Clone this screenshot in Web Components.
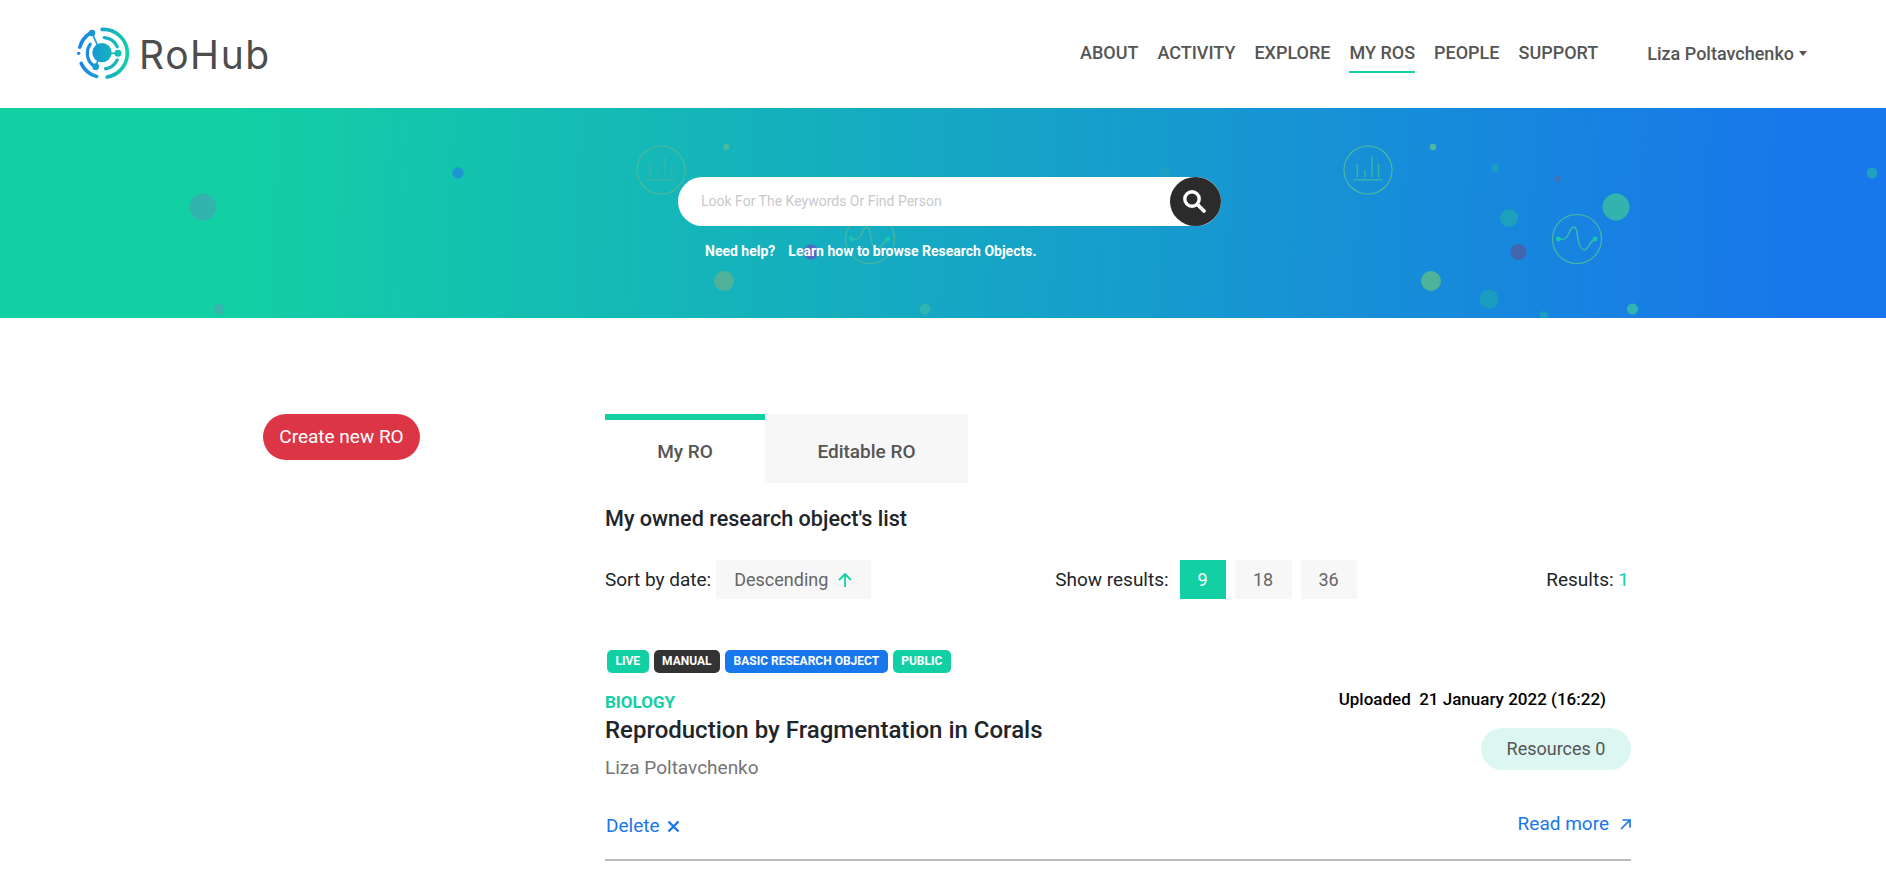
<!DOCTYPE html>
<html lang="en">
<head>
    <meta charset="UTF-8">
    <meta name="viewport" content="width=device-width, initial-scale=1.0">
    <title>RoHub</title>
    <style>
        html, body { margin: 0; background: #fff; }
        body { font-family: Roboto, "Liberation Sans", sans-serif; color: #212529; }
    </style>
</head>
<body>
    <rh-header>
        <rh-nav-link>ABOUT</rh-nav-link>
        <rh-nav-link>ACTIVITY</rh-nav-link>
        <rh-nav-link>EXPLORE</rh-nav-link>
        <rh-nav-link active>MY ROS</rh-nav-link>
        <rh-nav-link>PEOPLE</rh-nav-link>
        <rh-nav-link>SUPPORT</rh-nav-link>
        <span slot="user">Liza Poltavchenko</span>
    </rh-header>

    <rh-hero></rh-hero>

    <rh-page>
        <rh-create-button slot="side">Create new RO</rh-create-button>

        <rh-tabs>
            <rh-tab active>My RO</rh-tab>
            <rh-tab>Editable RO</rh-tab>
        </rh-tabs>
        <rh-list-heading>My owned research object's list</rh-list-heading>
        <rh-toolbar></rh-toolbar>

        <rh-card author="Liza Poltavchenko" category="BIOLOGY" uploaded="21 January 2022 (16:22)" resources="0">
            <rh-tag slot="tags" color="#13d0a4">LIVE</rh-tag>
            <rh-tag slot="tags" color="#333333">MANUAL</rh-tag>
            <rh-tag slot="tags" color="#1877ea">BASIC RESEARCH OBJECT</rh-tag>
            <rh-tag slot="tags" color="#13d0a4">PUBLIC</rh-tag>
            Reproduction by Fragmentation in Corals
        </rh-card>
    </rh-page>

    <template id="tplHeader">
        <style>
            :host { display: flex; height: 108px; box-sizing: border-box; padding-left: 73px; padding-right: 79px; background: #fff; }
            .logo { display: flex; align-items: center; gap: 6px; height: 108px; }
            .logo svg { width: 60px; height: 60px; display: block; }
            .logo span { font-family: Inter, sans-serif; font-weight: 400; font-size: 39px; color: #4d4d4d; letter-spacing: 1.6px; }
            nav { margin-left: auto; display: flex; gap: 19px; padding-top: 41px; align-items: flex-start; }
            .user { margin-left: 49px; display: flex; align-items: center; gap: 5px; height: 24px; font-weight: 500; font-size: 18px; color: #555; }
            .user i { width: 0; height: 0; border-top: 5px solid #555; border-left: 4px solid transparent; border-right: 4px solid transparent; }
        </style>
        <div class="logo">
            <svg viewBox="100 70 180 180" fill="none">
                <defs>
                    <linearGradient id="lg" gradientUnits="userSpaceOnUse" x1="113" y1="158" x2="268" y2="158">
                        <stop offset="0" stop-color="#1a7fec"/>
                        <stop offset="1" stop-color="#13d0a4"/>
                    </linearGradient>
                </defs>
                <g stroke="url(#lg)" stroke-linecap="round">
                    <g stroke-width="11">
                        <path d="M187.5 86A72 72 0 0 1 202.5 229"/>
                        <path d="M171 227.5A72 72 0 0 1 124.7 188.4"/>
                        <path d="M120.5 139.4A72 72 0 0 1 148.7 99"/>
                    </g>
                    <g stroke-width="10">
                        <path d="M194 111A47 47 0 0 1 232.6 138"/>
                        <path d="M159.8 194A47 47 0 0 1 151.5 131"/>
                        <path d="M232.6 178A47 47 0 0 1 198 204.3"/>
                    </g>
                    <path d="M157 97L183 155M235 158H183M168 198L183 155" stroke-width="5"/>
                </g>
                <circle cx="117" cy="158" r="5" fill="#1a7fec"/>
                <circle cx="157" cy="97" r="10" fill="url(#lg)"/>
                <circle cx="235" cy="158" r="10.5" fill="url(#lg)"/>
                <circle cx="168" cy="198" r="10" fill="url(#lg)"/>
                <circle cx="187" cy="156" r="29" fill="url(#lg)"/>
            </svg>
            <span>RoHub</span>
        </div>
        <nav><slot></slot></nav>
        <div style="padding-top:41px"><div class="user"><slot name="user"></slot><i></i></div></div>
    </template>

    <template id="tplNavLink">
        <style>
            :host { display: block; font-weight: 500; font-size: 18px; line-height: 24px; color: #555; padding-bottom: 6px; border-bottom: 2px solid transparent; }
            :host([active]) { border-bottom-color: #13d0a4; }
        </style>
        <slot></slot>
    </template>

    <template id="tplHero">
        <style>
            :host { display: block; position: relative; height: 210px; overflow: hidden; background: linear-gradient(92deg, #13d0a4 12%, #1877ea 95%); }
            svg { position: absolute; left: 0; top: 0; }
            .inner { position: relative; padding: 69px 0 0 678px; }
            .help { margin: 16px 0 0 27px; font-weight: 700; font-size: 14px; line-height: 18px; color: #fff; display: flex; gap: 13px; }
        </style>
        <svg id="deco" width="1886" height="210" viewBox="0 108 1886 210" fill="none"></svg>
        <div class="inner">
            <rh-search placeholder="Look For The Keywords Or Find Person"></rh-search>
            <div class="help"><span>Need help?</span><span>Learn how to browse Research Objects.</span></div>
        </div>
    </template>

    <template id="tplSearch">
        <style>
            :host { display: flex; width: 543px; height: 49px; background: #fff; border-radius: 25px; position: relative; }
            .ph { padding-left: 23px; font-size: 14px; line-height: 49px; color: #c9c9c9; }
            button { all: unset; margin-left: auto; width: 51px; height: 49px; border-radius: 50%; background: #2b2b2b; display: flex; align-items: center; justify-content: center; }
            button svg { margin: -1px 3px 0 0; }
        </style>
        <div class="ph" id="ph"></div>
        <button>
            <svg width="26" height="26" viewBox="0 0 26 26" fill="none" stroke="#fff">
                <circle cx="11" cy="11" r="7.2" stroke-width="3.4"/>
                <path d="M16.5 16.5L23 23" stroke-width="3.8" stroke-linecap="round"/>
            </svg>
        </button>
    </template>

    <template id="tplPage">
        <style>
            :host { display: grid; grid-template-columns: 343px 1026px; padding: 96px 0 0 262px; }
            .main { display: flex; flex-direction: column; }
        </style>
        <div><slot name="side"></slot></div>
        <div class="main"><slot></slot></div>
    </template>

    <template id="tplCreate">
        <style>
            :host { display: inline-block; width: 157px; height: 46px; margin-left: 1px; border-radius: 23px; background: #dc3545; color: #fff; font-size: 19px; line-height: 46px; text-align: center; }
        </style>
        <slot></slot>
    </template>

    <template id="tplTabs">
        <style>
            :host { display: flex; height: 69px; }
        </style>
        <slot></slot>
    </template>

    <template id="tplTab">
        <style>
            :host { display: flex; align-items: center; justify-content: center; box-sizing: border-box; width: 203px; padding-top: 5px; background: #f7f7f7; font-weight: 500; font-size: 19px; color: #555; }
            :host([active]) { width: 160px; background: #fff; border-top: 6px solid #13d0a4; padding-top: 0; }
        </style>
        <slot></slot>
    </template>

    <template id="tplHeading">
        <style>
            :host { display: block; margin-top: 22px; font-weight: 500; font-size: 21.6px; line-height: 28px; color: #212529; }
        </style>
        <slot></slot>
    </template>

    <template id="tplToolbar">
        <style>
            :host { display: flex; align-items: center; height: 39px; margin-top: 27px; font-size: 19px; color: #212529; }
            .box { display: flex; align-items: center; justify-content: center; height: 39px; background: #f7f7f7; color: #666; font-size: 18px; }
            .sort { width: 155px; margin-left: 5px; gap: 10px; justify-content: flex-start; box-sizing: border-box; padding-left: 18px; }
            .show { margin-left: 184px; margin-right: 11px; }
            .n { width: 57px; margin-right: 9px; }
            .n.on { width: 46px; background: #13d0a4; color: #fff; }
            .n.last { width: 56px; margin-right: 0; }
            .res { margin-left: auto; padding-right: 2px; }
            .res b { font-weight: 400; color: #13d0a4; }
        </style>
        <span>Sort by date:</span>
        <div class="box sort">
            <span>Descending</span>
            <svg width="14" height="14" viewBox="0 0 14 14" fill="none" stroke="#13d0a4" stroke-width="1.8"><path d="M7 14V1M1 7l6-6 6 6"/></svg>
        </div>
        <span class="show">Show results:</span>
        <div class="box n on">9</div>
        <div class="box n">18</div>
        <div class="box n last">36</div>
        <span class="res">Results: <b>1</b></span>
    </template>

    <template id="tplTag">
        <style>
            :host { display: block; height: 23px; padding: 0 8.5px; border-radius: 5px; font-weight: 700; font-size: 12px; line-height: 23px; color: #fff; background: var(--tag, #13d0a4); }
        </style>
        <slot></slot>
    </template>

    <template id="tplCard">
        <style>
            :host { display: block; margin-top: 51px; padding-bottom: 21px; border-bottom: 2px solid #bdbdbd; }
            .tags { display: flex; gap: 5px; padding-left: 2px; }
            .body { display: flex; justify-content: space-between; margin-top: 16px; }
            .left { padding-top: 3px; }
            .cat { font-weight: 700; font-size: 17px; line-height: 20px; color: #13d0a4; }
            .title { margin-top: 3px; font-weight: 500; font-size: 24px; line-height: 30px; color: #212529; }
            .author { margin-top: 11px; font-size: 19px; line-height: 24px; color: #757575; }
            .right { display: flex; flex-direction: column; align-items: flex-end; }
            .up { margin-right: 25px; font-weight: 500; font-size: 17px; line-height: 20px; color: #000; white-space: pre; }
            .pill { margin-top: 19px; width: 150px; height: 42px; border-radius: 21px; background: #dcf7f1; color: #555; font-size: 18px; line-height: 42px; text-align: center; }
            .foot { display: flex; justify-content: space-between; margin-top: 32px; height: 26px; font-size: 19px; line-height: 24px; color: #1877ea; }
            .foot div { display: flex; align-items: center; height: 24px; }
            .del { padding: 2px 0 0 1px; gap: 7px; }
            .more { gap: 11px; }
        </style>
        <div class="tags"><slot name="tags"></slot></div>
        <div class="body">
            <div class="left">
                <div class="cat" id="cat"></div>
                <div class="title"><slot></slot></div>
                <div class="author" id="author"></div>
            </div>
            <div class="right">
                <div class="up" id="up"></div>
                <div class="pill" id="pill"></div>
            </div>
        </div>
        <div class="foot">
            <div class="del">Delete
                <svg width="13" height="13" viewBox="0 0 13 13" fill="none" stroke="#1877ea" stroke-width="2.4"><path d="M1.5 1.5l10 10M11.5 1.5l-10 10"/></svg>
            </div>
            <div class="more">Read more
                <svg width="11" height="11" viewBox="0 0 11 11" fill="none" stroke="#1877ea" stroke-width="1.7"><path d="M1 10L10 1M2.5 1H10V8.5"/></svg>
            </div>
        </div>
    </template>

    <script>
        // little helper, every element here is just a template stamped in an open shadow root
        function define(tag, tplId, onCreate) {
            customElements.define(tag, class extends HTMLElement {
                constructor() {
                    super();
                    const root = this.attachShadow({ mode: 'open' });
                    root.appendChild(document.getElementById(tplId).content.cloneNode(true));
                    if (onCreate) onCreate(this, root);
                }
                connectedCallback() {
                    if (this.render) this.render(this.shadowRoot);
                }
            });
        }

        define('rh-header', 'tplHeader');
        define('rh-nav-link', 'tplNavLink');
        define('rh-page', 'tplPage');
        define('rh-create-button', 'tplCreate');
        define('rh-tabs', 'tplTabs');
        define('rh-tab', 'tplTab');
        define('rh-list-heading', 'tplHeading');
        define('rh-toolbar', 'tplToolbar');

        define('rh-search', 'tplSearch', (el, root) => {
            el.render = r => { r.getElementById('ph').textContent = el.getAttribute('placeholder'); };
        });

        define('rh-tag', 'tplTag', el => {
            el.render = () => { el.style.setProperty('--tag', el.getAttribute('color')); };
        });

        define('rh-card', 'tplCard', el => {
            el.render = r => {
                r.getElementById('cat').textContent = el.getAttribute('category');
                r.getElementById('author').textContent = el.getAttribute('author');
                r.getElementById('up').textContent = 'Uploaded  ' + el.getAttribute('uploaded');
                r.getElementById('pill').textContent = 'Resources ' + el.getAttribute('resources');
            };
        });

        // dots of the banner: x, y, radius, colour
        const heroDots = [
            [203, 207, 13.5, '#33b3ae'], [458, 173, 5.7, '#1f96d4'], [219, 309, 5.5, '#35b5ad'],
            [726, 147, 3.2, '#4cb89e'], [811, 252, 7.5, '#4f6cc8'], [724, 281, 10, '#4fb39a'],
            [925, 309, 5.5, '#2fb4b0'], [836, 315, 4, '#16b0b8'],
            [1165, 173, 5.5, '#1ea0c0'],
            [1433, 147, 3.2, '#4cb89e'], [1495, 168, 4, '#1a9fc0'], [1557.5, 179, 3, '#4a6fb5'],
            [1509, 218, 9, '#1ca0bb'], [1616, 207, 13.5, '#33b3ae'], [1518.5, 252, 8, '#4366b0'],
            [1431, 281, 10, '#4fb39a'], [1489, 299, 9.5, '#1a9cc0'], [1632.5, 309, 5.5, '#2fb4b0'],
            [1543.6, 315, 4, '#18a0c0'], [1872, 173, 5.5, '#1ea0c0']
        ];

        function chartRing(x, y) {
            return `<g transform="translate(${x} ${y})">
                <circle r="24" stroke="#4cb89e" stroke-width="1.2"/>
                <path d="M-10.7 7.3V-6M-3 7.3V.3M4 7.3V-13.3M10.6 7.3V-6M-14.6 9.7H14.4" stroke="#35b5a8" stroke-width="1.5"/>
            </g>`;
        }

        function waveRing(x, y) {
            return `<g transform="translate(${x} ${y})">
                <circle r="24.5" stroke="#4cb89e" stroke-width="1.2"/>
                <path d="M-18.7 0C-12 1 -10 -1 -8 -6C-6.5 -10 -5 -12 -3.2 -12C0 -12 0 -6 1 0C2 6 4 10.7 7.6 10.7C11 10.7 12 3 18 0" stroke="#40b8a8" stroke-width="1.4"/>
                <circle cx="-18.7" r="2.4" fill="#13c9b0"/>
                <circle cx="18" r="2.4" fill="#13c9b0"/>
            </g>`;
        }

        define('rh-hero', 'tplHero', (el, root) => {
            root.getElementById('deco').innerHTML =
                heroDots.map(d => `<circle cx="${d[0]}" cy="${d[1]}" r="${d[2]}" fill="${d[3]}"/>`).join('') +
                chartRing(661, 170) + chartRing(1368, 170) + waveRing(870, 239) + waveRing(1577, 239);
        });
    </script>
</body>
</html>
